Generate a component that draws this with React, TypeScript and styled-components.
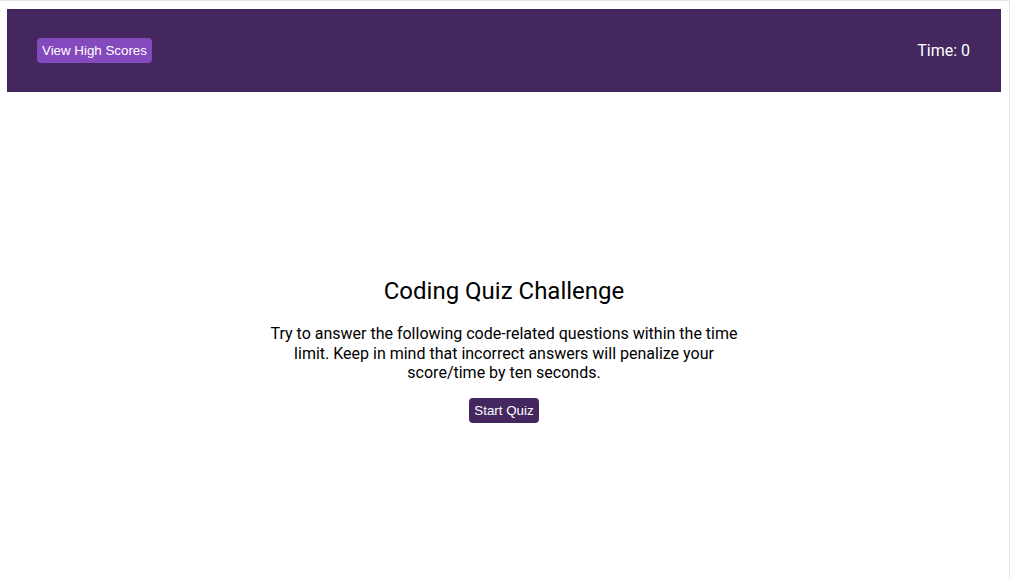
import React from "react";
import styled, { createGlobalStyle } from "styled-components";

const Global = createGlobalStyle`
  html, body { margin: 0; padding: 0; background: #ffffff; }
  body { font-family: Roboto, "Liberation Sans", sans-serif; }
`;

const Page = styled.div`
  box-sizing: border-box;
  width: 1010px;
  min-height: 578px;
  border-top: 1px solid #e4e4e4;
  border-right: 1px solid #e8e8e8;
  padding: 8px 8px 0 7px;
`;

const Header = styled.header`
  box-sizing: border-box;
  height: 83px;
  width: 994px;
  background: #43275e;
  display: flex;
  align-items: center;
  justify-content: space-between;
  padding: 0 31px 0 30px;
`;

const Button = styled.button<{ $tone: "light" | "dark" }>`
  font-family: "Liberation Sans", Arial, sans-serif;
  font-size: 13.33px;
  line-height: 15px;
  color: #ffffff;
  background: ${(p) => (p.$tone === "light" ? "#8549be" : "#43275e")};
  border: none;
  border-radius: 4px;
  padding: 5px 5px;
  cursor: pointer;
`;

const Timer = styled.div`
  color: #ffffff;
  font-size: 16px;
  font-family: Roboto, sans-serif;
`;

const Main = styled.main`
  width: 994px;
  display: flex;
  flex-direction: column;
  align-items: center;
  padding-top: 185px;
  text-align: center;
`;

const Title = styled.h1`
  margin: 0;
  font-size: 24px;
  font-weight: 400;
  color: #000;
`;

const Intro = styled.p`
  margin: 19px 0 15px;
  width: 480px;
  font-size: 16px;
  line-height: 19.5px;
  color: #000;
`;

export default function App() {
  return (
    <>
      <Global />
      <Page>
        <Header>
          <Button $tone="light">View High Scores</Button>
          <Timer>Time: 0</Timer>
        </Header>
        <Main>
          <Title>Coding Quiz Challenge</Title>
          <Intro>
            Try to answer the following code-related questions within the time
            limit. Keep in mind that incorrect answers will penalize your
            score/time by ten seconds.
          </Intro>
          <Button $tone="dark">Start Quiz</Button>
        </Main>
      </Page>
    </>
  );
}
